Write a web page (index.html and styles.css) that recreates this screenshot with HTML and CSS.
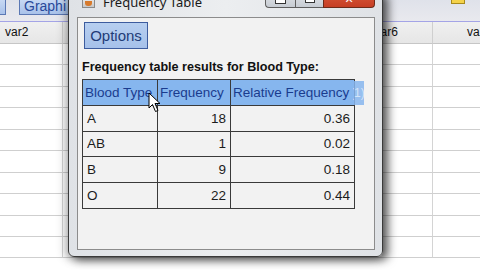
FILE: index.html
```html
<!DOCTYPE html>
<html>
<head>
<meta charset="utf-8">
<link rel="stylesheet" href="styles.css">
</head>
<body>
<div class="app">
  <div class="toolbar">
    <span class="tbtn tbtn-small"></span>
    <span class="tbtn">Graphi</span>
    <span class="spacer"></span>
    <span class="warn"></span>
  </div>
  <div class="sheet">
    <div class="hcell">var2</div><div class="hcell">var3</div><div class="hcell">var4</div><div class="hcell">var5</div><div class="hcell">var6</div><div class="hcell">var7</div>
    <div class="cell"></div><div class="cell"></div><div class="cell"></div><div class="cell"></div><div class="cell"></div><div class="cell"></div>
    <div class="cell"></div><div class="cell"></div><div class="cell"></div><div class="cell"></div><div class="cell"></div><div class="cell"></div>
    <div class="cell"></div><div class="cell"></div><div class="cell"></div><div class="cell"></div><div class="cell"></div><div class="cell"></div>
    <div class="cell"></div><div class="cell"></div><div class="cell"></div><div class="cell"></div><div class="cell"></div><div class="cell"></div>
    <div class="cell"></div><div class="cell"></div><div class="cell"></div><div class="cell"></div><div class="cell"></div><div class="cell"></div>
    <div class="cell"></div><div class="cell"></div><div class="cell"></div><div class="cell"></div><div class="cell"></div><div class="cell"></div>
    <div class="cell"></div><div class="cell"></div><div class="cell"></div><div class="cell"></div><div class="cell"></div><div class="cell"></div>
    <div class="cell"></div><div class="cell"></div><div class="cell"></div><div class="cell"></div><div class="cell"></div><div class="cell"></div>
    <div class="cell"></div><div class="cell"></div><div class="cell"></div><div class="cell"></div><div class="cell"></div><div class="cell"></div>
    <div class="cell"></div><div class="cell"></div><div class="cell"></div><div class="cell"></div><div class="cell"></div><div class="cell"></div>
  </div>

  <div class="window">
    <div class="titlebar">
      <span class="ticon"><span class="ticon-cup"></span></span>
      <span class="ttitle">Frequency Table</span>
      <div class="captions">
        <span class="cb cb-min"><span class="g-min"></span></span>
        <span class="cb cb-max"><span class="g-max"></span></span>
        <span class="cb cb-close">✕</span>
      </div>
    </div>
    <div class="client">
      <div class="menubar"><span class="menu">Options</span></div>
      <div class="content">
        <div class="caption-text">Frequency table results for Blood Type:</div>
        <table class="freq">
          <tr class="head"><th class="c1">Blood Type</th><th class="c2">Frequency</th><th class="c3">Relative Frequency</th></tr>
          <tr><td class="c1">A</td><td class="num">18</td><td class="num">0.36</td></tr>
          <tr><td class="c1">AB</td><td class="num">1</td><td class="num">0.02</td></tr>
          <tr><td class="c1">B</td><td class="num">9</td><td class="num">0.18</td></tr>
          <tr><td class="c1">O</td><td class="num">22</td><td class="num">0.44</td></tr>
        </table>
      </div>
    </div>
    <div class="ghost"><span class="ghost-text">(1)</span></div>
    <svg class="cursor" width="13" height="22" viewBox="0 0 13 22">
      <path d="M1 1 L1 16 L4.5 12.5 L7.5 19.5 L10 18.5 L7 11.5 L12 11.5 Z" fill="#fff" stroke="#000" stroke-width="1" stroke-linejoin="round"/>
    </svg>
  </div>
</div>
</body>
</html>
```

FILE: styles.css
```css
html, body {
  margin: 0;
  padding: 0;
  width: 480px;
  height: 270px;
  overflow: hidden;
  background: #ffffff;
  font-family: "Liberation Sans", Arial, sans-serif;
}

.app {
  position: relative;
  width: 480px;
  height: 270px;
  overflow: hidden;
}

/* ---------- background application ---------- */
.toolbar {
  height: 22px;
  box-sizing: border-box;
  display: flex;
  align-items: flex-start;
  gap: 13px;
  background: linear-gradient(#dfe2ea, #e9e9ee);
  border-bottom: 1px solid #a4a4e6;
  margin-left: -10px;
}

.tbtn {
  display: inline-block;
  height: 17px;
  box-sizing: border-box;
  padding: 0 4px;
  margin-top: -2px;
  border: 1px solid #5b78b4;
  background: linear-gradient(#c9daf4, #a9c2ea);
  color: #28489a;
  font-size: 14px;
  line-height: 15px;
  font-family: "Liberation Sans", Arial, sans-serif;
}

.tbtn-small {
  width: 16px;
}

.spacer {
  flex: 1;
}

.warn {
  width: 12px;
  height: 4px;
  margin-right: 15px;
  margin-top: -1px;
  background: #f4d24a;
  border: 1px solid #a88a1c;
  border-top: none;
}

.sheet {
  display: grid;
  grid-template-columns: repeat(6, 92.4px);
  grid-template-rows: 22px;
  grid-auto-rows: 21.44px;
  margin-left: -29px;
}

.hcell {
  box-sizing: border-box;
  background: linear-gradient(#f0f0f0, #e6e6e6);
  border-bottom: 1px solid #c6c6c6;
  border-right: 1px solid #cfcfcf;
  font-size: 12px;
  line-height: 21px;
  text-align: center;
  color: #111;
}

.cell {
  box-sizing: border-box;
  border-bottom: 1px solid #cfcfcf;
  border-right: 1px solid #d4d4d4;
  background: #fff;
}

/* ---------- dialog window ---------- */
.window {
  position: absolute;
  left: 68px;
  top: -9px;
  width: 315px;
  height: 266px;
  box-sizing: border-box;
  border: 1px solid #3a3a3a;
  border-radius: 6px;
  background: linear-gradient(90deg, #dfe2e6, #eceef0 50%, #dfe2e6);
  padding: 0 7px 6px 8px;
  display: flex;
  flex-direction: column;
  box-shadow: 5px 3px 10px rgba(0, 0, 0, 0.65), -3px 2px 10px rgba(0, 0, 0, 0.25);
}

.titlebar {
  height: 25px;
  display: flex;
  align-items: center;
  gap: 8px;
  padding-left: 5px;
  position: relative;
}

.ticon {
  width: 13px;
  height: 13px;
  margin-top: -6px;
  box-sizing: border-box;
  border: 1px solid #8a8a8a;
  background: linear-gradient(#f4f4f4, #c8c8c8);
  display: flex;
  align-items: flex-end;
  justify-content: center;
}

.ticon-cup {
  width: 7px;
  height: 5px;
  margin-bottom: 1px;
  background: #d77a2c;
  border-radius: 0 0 3px 3px;
}

.ttitle {
  font-family: "Noto Sans", "Open Sans", sans-serif;
  font-size: 13px;
  color: #1a1a1a;
  margin-top: -6px;
}

.captions {
  position: absolute;
  top: -1px;
  right: 0;
  display: flex;
}

.cb {
  height: 17px;
  box-sizing: border-box;
  border: 1px solid #5e5e5e;
  border-top: none;
  display: flex;
  align-items: center;
  justify-content: center;
}

.cb-min {
  width: 30px;
  background: linear-gradient(#e4e7eb, #c7ccd3);
  border-radius: 0 0 0 4px;
  border-right: none;
}

.cb-max {
  width: 28px;
  background: linear-gradient(#e4e7eb, #c7ccd3);
  border-right: none;
}

.cb-close {
  width: 52px;
  background: linear-gradient(#d95a3c, #c63e24);
  border-color: #6e2a18;
  border-radius: 0 0 4px 0;
  color: #fff;
  font-size: 11px;
  font-weight: bold;
  font-family: "DejaVu Sans", sans-serif;
  line-height: 1;
}

.g-min {
  width: 9px;
  height: 3px;
  margin-top: 5px;
  border: 1px solid #333;
  background: #fff;
}

.g-max {
  width: 10px;
  height: 7px;
  box-sizing: border-box;
  border: 1px solid #333;
  border-top-width: 2px;
  background: #fff;
}

.client {
  flex: 1;
  background: #f2f2f2;
  border: 1px solid #8c8c8c;
  display: flex;
  flex-direction: column;
}

.menubar {
  padding: 4px 6px 0;
  display: flex;
}

.menu {
  height: 27px;
  width: 64px;
  box-sizing: border-box;
  border: 1px solid #3d5c9e;
  background: linear-gradient(#b7cff0, #a6c1ea);
  color: #1f3c78;
  font-family: "Liberation Sans", Arial, sans-serif;
  font-size: 15px;
  line-height: 25px;
  text-align: center;
}

.content {
  padding: 11px 0 0 4px;
}

.caption-text {
  font-weight: bold;
  font-size: 12.6px;
  line-height: 14px;
  color: #111;
  margin-bottom: 5px;
}

.freq {
  border-collapse: collapse;
  border: 1px solid #3a3a3a;
  font-size: 13.5px;
  color: #1c1c1c;
  table-layout: fixed;
  width: 272px;
}

.freq th, .freq td {
  border: 1px solid #3a3a3a;
  height: 25.8px;
  padding: 0 4px;
  box-sizing: border-box;
  white-space: nowrap;
  overflow: hidden;
}

.freq .c1 { width: 75px; text-align: left; }
.freq .c2 { width: 73px; }
.freq .c3 { width: 124px; }

.freq th {
  font-weight: normal;
  background: #86b6ee;
  color: #1a3c8e;
  text-align: left;
  padding: 0 2px;
}

.freq td.num {
  text-align: right;
}

.ghost {
  position: absolute;
  left: 284px;
  top: 89px;
  width: 11px;
  height: 24px;
  background: rgba(135, 182, 238, 0.85);
  overflow: hidden;
}

.ghost-text {
  display: block;
  margin-left: -3px;
  font-size: 12px;
  line-height: 24px;
  color: rgba(255, 255, 255, 0.6);
}

.cursor {
  position: absolute;
  left: 79px;
  top: 100px;
}
```
